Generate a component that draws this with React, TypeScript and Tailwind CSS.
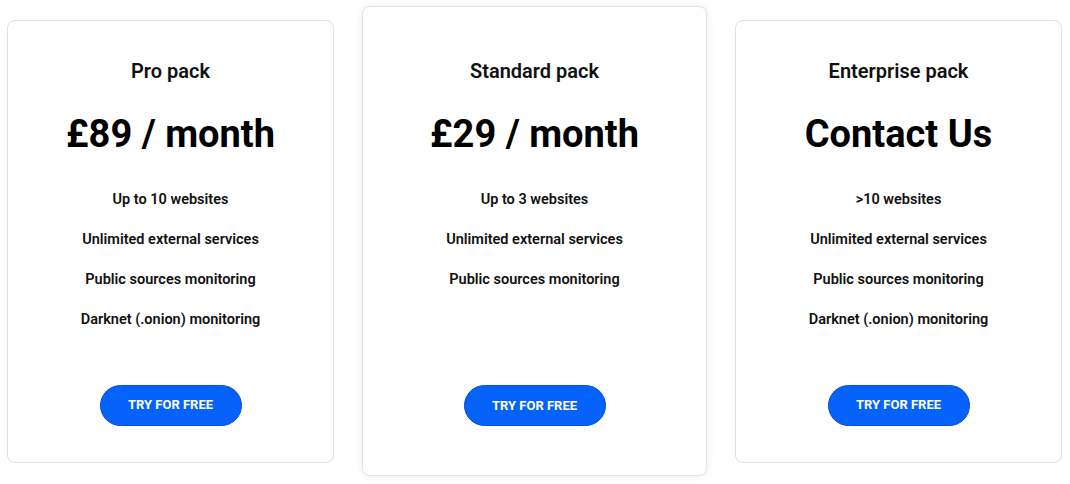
import React from "react";

type Plan = {
  name: string;
  price: string;
  features: string[];
  featured?: boolean;
};

const plans: Plan[] = [
  {
    name: "Pro pack",
    price: "£89 / month",
    features: [
      "Up to 10 websites",
      "Unlimited external services",
      "Public sources monitoring",
      "Darknet (.onion) monitoring",
    ],
  },
  {
    name: "Standard pack",
    price: "£29 / month",
    features: ["Up to 3 websites", "Unlimited external services", "Public sources monitoring"],
    featured: true,
  },
  {
    name: "Enterprise pack",
    price: "Contact Us",
    features: [
      ">10 websites",
      "Unlimited external services",
      "Public sources monitoring",
      "Darknet (.onion) monitoring",
    ],
  },
];

function PlanCard({ plan }: { plan: Plan }) {
  return (
    <div
      className={
        plan.featured
          ? "flex flex-col items-center w-[345px] h-[470px] pt-[50px] pb-[49px] bg-white rounded-[8px] border border-[#e3e3e8] shadow-[0_0_8px_rgba(0,0,0,0.08)]"
          : "flex flex-col items-center w-[327px] h-[443px] pt-[36px] pb-[36px] bg-white rounded-[8px] border border-[#e0e0e6]"
      }
    >
      <h3 className="text-[20px] leading-[28px] font-semibold text-[#111]">{plan.name}</h3>
      <div className="mt-[26px] text-[38px] leading-[46px] font-bold text-black">{plan.price}</div>
      <ul className="mt-[33px] flex flex-col gap-[20px]">
        {plan.features.map((f) => (
          <li key={f} className="text-[14.5px] leading-[20px] font-semibold text-[#111] text-center">
            {f}
          </li>
        ))}
      </ul>
      {/* button sits at the bottom regardless of list length */}
      <button className="mt-auto w-[142px] h-[41px] rounded-full bg-[#0562fb] border border-[#0a50d4] text-white text-[13px] font-bold uppercase">
        Try for free
      </button>
    </div>
  );
}

export default function App() {
  return (
    <div
      className="w-[1070px] h-[484px] bg-white pt-[6px] pl-[7px]"
      style={{ fontFamily: "Roboto, 'Noto Sans', sans-serif" }}
    >
      <div className="flex items-center h-[470px]">
        <PlanCard plan={plans[0]} />
        <div className="ml-[28px]">
          <PlanCard plan={plans[1]} />
        </div>
        <div className="ml-[28px]">
          <PlanCard plan={plans[2]} />
        </div>
      </div>
    </div>
  );
}
